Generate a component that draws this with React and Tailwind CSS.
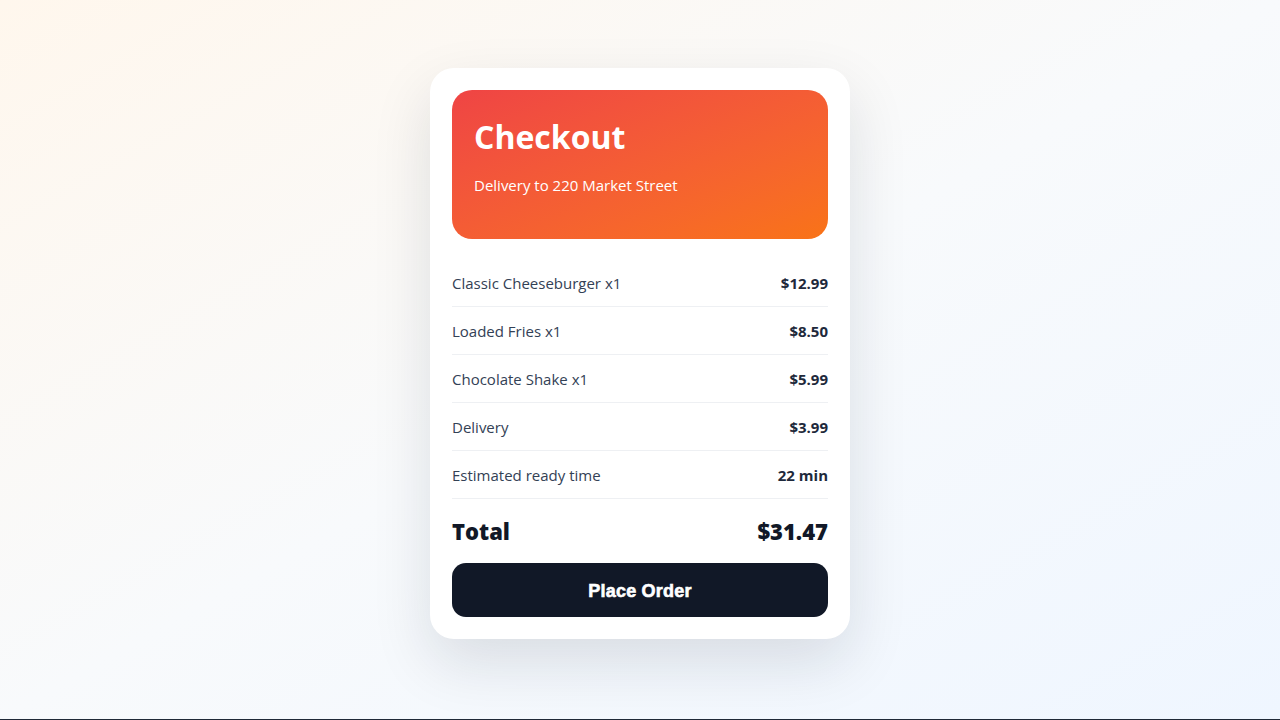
import React from "react";

const lines = [
  { label: "Classic Cheeseburger x1", value: "$12.99" },
  { label: "Loaded Fries x1", value: "$8.50" },
  { label: "Chocolate Shake x1", value: "$5.99" },
  { label: "Delivery", value: "$3.99" },
  { label: "Estimated ready time", value: "22 min" },
];

export default function App() {
  return (
    <div className="min-h-screen bg-[#1f2937]">
      <div
        className="h-[719px] bg-gradient-to-br from-[#fff7ed] via-[#f8fafc] to-[#eff6ff] flex justify-center pt-[68px]"
        style={{ fontFamily: '"Segoe UI", "Open Sans", sans-serif' }}
      >
        <div className="w-[420px] h-[571px] bg-white rounded-[24px] p-[22px] shadow-[0_24px_60px_rgba(15,23,42,0.12)] flex flex-col">
          <div className="h-[150px] rounded-[20px] bg-gradient-to-br from-[#ef4444] to-[#f97316] px-[22px] pt-[25px] text-white">
            <h1 className="text-[32px] font-bold leading-[44px]">Checkout</h1>
            <p className="mt-[15px] text-[15px] leading-[22px]">Delivery to 220 Market Street</p>
          </div>

          <div className="mt-[20px]">
            {lines.map((line) => (
              <div
                key={line.label}
                className="h-[48px] flex items-center justify-between border-b border-[#eef0f3] text-[15px]"
              >
                <span className="text-[#334155]">{line.label}</span>
                <span className="font-bold text-[#1e293b]">{line.value}</span>
              </div>
            ))}
          </div>

          <div className="flex items-center justify-between pt-[16px] text-[22px] font-extrabold leading-[33px] text-[#111827]">
            <span>Total</span>
            <span>$31.47</span>
          </div>

          <button
            className="mt-[15px] h-[54px] rounded-[14px] bg-[#111827] text-white text-[18px] font-bold tracking-[0.2px] [-webkit-text-stroke:0.6px_white] pt-[3px]"
            style={{ fontFamily: '"Liberation Sans", Arial, sans-serif' }}
          >
            Place Order
          </button>
        </div>
      </div>
    </div>
  );
}
